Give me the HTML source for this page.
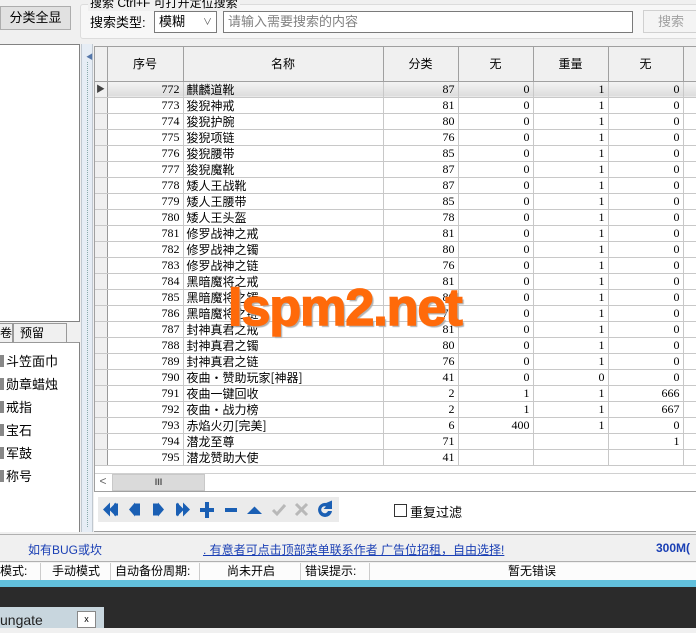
<!DOCTYPE html><html><head><meta charset="utf-8"><style>
*{box-sizing:border-box;margin:0;padding:0}
body{width:696px;height:628px;overflow:hidden;background:#f0f0f0;font-family:"Liberation Sans","Noto Sans CJK SC",sans-serif;font-size:12px;color:#000;position:relative}
.a{position:absolute}
.g td{height:16px;border-right:1px solid #c8c8c8;border-bottom:1px solid #c8c8c8;padding:0 3px;font-size:12px;line-height:15px;white-space:nowrap;overflow:hidden}
.g{border-collapse:collapse;table-layout:fixed;font-family:"Liberation Serif","Noto Sans CJK SC",serif}
.g td.r{text-align:right}
.g td.n{font-family:"Noto Sans CJK SC",sans-serif}
.g td.i{background:#f0f0f0;border-right:1px solid #999}
.hd td{height:35px;background:#f0f0f0;text-align:center;border-right:1px solid #a0a0a0;border-bottom:1px solid #a0a0a0;font-family:"Noto Sans CJK SC",sans-serif;font-size:12px}
.sel td{background:linear-gradient(#f4f4f4,#dcdcdc)}
.li{position:absolute;left:0;font-size:13px}
.li:before{content:"";display:inline-block;width:4px;height:12px;background:#888;margin-right:2px;vertical-align:-1px}
</style></head><body>
<!-- top -->
<div class="a" style="left:0;top:6px;width:71px;height:24px;background:#e1e1e1;border:1px solid #adadad;text-align:center;line-height:22px;font-size:13px">分类全显</div>
<div class="a" style="left:80px;top:4px;width:620px;height:35px;border:1px solid #dcdcdc;border-radius:3px;background:#f7f7f7"></div>
<div class="a" style="left:88px;top:-6px;font-size:12px;background:#f0f0f0;padding:0 2px">搜索  Ctrl+F 可打开定位搜索</div>
<div class="a" style="left:90px;top:12px;font-size:13px">搜索类型:</div>
<div class="a" style="left:154px;top:11px;width:63px;height:22px;border:1px solid #7a7a7a;background:#fff;font-size:13px;line-height:20px;padding-left:4px">模糊<span style="position:absolute;right:4px;top:0;font-size:9px;color:#555">&#8744;</span></div>
<div class="a" style="left:223px;top:11px;width:410px;height:22px;border:1px solid #7a7a7a;background:#fff;font-size:13px;line-height:20px;padding-left:4px;color:#808080">请输入需要搜索的内容</div>
<div class="a" style="left:643px;top:10px;width:60px;height:23px;border:1px solid #d0d0d0;background:#f4f4f4;color:#a0a0a0;font-size:13px;line-height:21px;padding-left:14px">搜索</div>
<!-- left -->
<div class="a" style="left:0;top:44px;width:80px;height:278px;background:#fff;border:1px solid #828282;border-left:none"></div>
<div class="a" style="left:-10px;top:323px;width:23px;height:20px;border:1px solid #999;background:#f0f0f0;font-size:12px;line-height:18px;text-align:right">卷</div>
<div class="a" style="left:13px;top:323px;width:54px;height:20px;border:1px solid #999;background:#f0f0f0;font-size:12px;line-height:18px;padding-left:6px">预留</div>
<div class="a" style="left:0;top:342px;width:80px;height:190px;background:#fff;border-right:1px solid #828282;border-top:1px solid #999"></div>
<div class="li" style="top:351px">斗笠面巾</div>
<div class="li" style="top:374px">勋章蜡烛</div>
<div class="li" style="top:397px">戒指</div>
<div class="li" style="top:420px">宝石</div>
<div class="li" style="top:443px">军鼓</div>
<div class="li" style="top:466px">称号</div>
<div class="a" style="left:81px;top:44px;width:12px;height:488px;background:#e6edf5;border-left:1px solid #c0c8d0;border-right:1px solid #c0c8d0"></div>
<div class="a" style="left:87px;top:62px;height:465px;border-left:1px dotted #8aa"></div>
<div class="a" style="left:86px;top:52px;font-size:7px;color:#5577aa">&#9664;</div>
<!-- grid -->
<div class="a" style="left:94px;top:46px;width:602px;height:445px;background:#fff;border-top:1px solid #a0a0a0;border-left:1px solid #a0a0a0;overflow:hidden">
<table class="g" style="width:640px;margin-top:-1px"><colgroup><col style="width:12px"><col style="width:76px"><col style="width:200px"><col style="width:75px"><col style="width:75px"><col style="width:75px"><col style="width:75px"><col style="width:52px"></colgroup>
<tr class="hd"><td></td><td>序号</td><td>名称</td><td>分类</td><td>无</td><td>重量</td><td>无</td><td></td></tr>
<tr class="sel"><td class="i" style="font-size:9px;color:#444;padding:0 1px">&#9654;</td><td class="r">772</td><td class="n">麒麟道靴</td><td class="r">87</td><td class="r">0</td><td class="r">1</td><td class="r">0</td><td></td></tr>
<tr><td class="i"></td><td class="r">773</td><td class="n">狻猊神戒</td><td class="r">81</td><td class="r">0</td><td class="r">1</td><td class="r">0</td><td></td></tr>
<tr><td class="i"></td><td class="r">774</td><td class="n">狻猊护腕</td><td class="r">80</td><td class="r">0</td><td class="r">1</td><td class="r">0</td><td></td></tr>
<tr><td class="i"></td><td class="r">775</td><td class="n">狻猊项链</td><td class="r">76</td><td class="r">0</td><td class="r">1</td><td class="r">0</td><td></td></tr>
<tr><td class="i"></td><td class="r">776</td><td class="n">狻猊腰带</td><td class="r">85</td><td class="r">0</td><td class="r">1</td><td class="r">0</td><td></td></tr>
<tr><td class="i"></td><td class="r">777</td><td class="n">狻猊魔靴</td><td class="r">87</td><td class="r">0</td><td class="r">1</td><td class="r">0</td><td></td></tr>
<tr><td class="i"></td><td class="r">778</td><td class="n">矮人王战靴</td><td class="r">87</td><td class="r">0</td><td class="r">1</td><td class="r">0</td><td></td></tr>
<tr><td class="i"></td><td class="r">779</td><td class="n">矮人王腰带</td><td class="r">85</td><td class="r">0</td><td class="r">1</td><td class="r">0</td><td></td></tr>
<tr><td class="i"></td><td class="r">780</td><td class="n">矮人王头盔</td><td class="r">78</td><td class="r">0</td><td class="r">1</td><td class="r">0</td><td></td></tr>
<tr><td class="i"></td><td class="r">781</td><td class="n">修罗战神之戒</td><td class="r">81</td><td class="r">0</td><td class="r">1</td><td class="r">0</td><td></td></tr>
<tr><td class="i"></td><td class="r">782</td><td class="n">修罗战神之镯</td><td class="r">80</td><td class="r">0</td><td class="r">1</td><td class="r">0</td><td></td></tr>
<tr><td class="i"></td><td class="r">783</td><td class="n">修罗战神之链</td><td class="r">76</td><td class="r">0</td><td class="r">1</td><td class="r">0</td><td></td></tr>
<tr><td class="i"></td><td class="r">784</td><td class="n">黑暗魔将之戒</td><td class="r">81</td><td class="r">0</td><td class="r">1</td><td class="r">0</td><td></td></tr>
<tr><td class="i"></td><td class="r">785</td><td class="n">黑暗魔将之镯</td><td class="r">80</td><td class="r">0</td><td class="r">1</td><td class="r">0</td><td></td></tr>
<tr><td class="i"></td><td class="r">786</td><td class="n">黑暗魔将之链</td><td class="r">76</td><td class="r">0</td><td class="r">1</td><td class="r">0</td><td></td></tr>
<tr><td class="i"></td><td class="r">787</td><td class="n">封神真君之戒</td><td class="r">81</td><td class="r">0</td><td class="r">1</td><td class="r">0</td><td></td></tr>
<tr><td class="i"></td><td class="r">788</td><td class="n">封神真君之镯</td><td class="r">80</td><td class="r">0</td><td class="r">1</td><td class="r">0</td><td></td></tr>
<tr><td class="i"></td><td class="r">789</td><td class="n">封神真君之链</td><td class="r">76</td><td class="r">0</td><td class="r">1</td><td class="r">0</td><td></td></tr>
<tr><td class="i"></td><td class="r">790</td><td class="n">夜曲・赞助玩家[神器]</td><td class="r">41</td><td class="r">0</td><td class="r">0</td><td class="r">0</td><td></td></tr>
<tr><td class="i"></td><td class="r">791</td><td class="n">夜曲一键回收</td><td class="r">2</td><td class="r">1</td><td class="r">1</td><td class="r">666</td><td></td></tr>
<tr><td class="i"></td><td class="r">792</td><td class="n">夜曲・战力榜</td><td class="r">2</td><td class="r">1</td><td class="r">1</td><td class="r">667</td><td></td></tr>
<tr><td class="i"></td><td class="r">793</td><td class="n">赤焰火刃[完美]</td><td class="r">6</td><td class="r">400</td><td class="r">1</td><td class="r">0</td><td></td></tr>
<tr><td class="i"></td><td class="r">794</td><td class="n">潜龙至尊</td><td class="r">71</td><td class="r"></td><td class="r"></td><td class="r">1</td><td></td></tr>
<tr><td class="i"></td><td class="r">795</td><td class="n">潜龙赞助大使</td><td class="r">41</td><td class="r"></td><td class="r"></td><td class="r"></td><td></td></tr>
</table>
<div class="a" style="left:0;top:426px;width:602px;height:18px;background:#fff;border-top:1px solid #d0d0d0"></div>
<div class="a" style="left:0;top:426px;width:16px;height:18px;font-size:12px;color:#666;text-align:center;line-height:17px">&lt;</div>
<div class="a" style="left:17px;top:427px;width:93px;height:17px;background:#dadada;border:1px solid #c8c8c8;text-align:center;font-size:9px;line-height:15px;color:#555;font-weight:bold">III</div>
</div>
<div class="a" style="left:94px;top:491px;width:602px;height:41px;background:#fff;border-top:1px solid #a0a0a0;border-bottom:1px solid #a0a0a0"></div>
<div class="a" style="left:98px;top:497px;width:241px;height:25px;background:#ebebeb"></div>
<svg class="a" style="left:98px;top:497px" width="241" height="25" viewBox="0 0 241 25">
<g fill="#1a5fb4">
<path d="M5 12.5l7-7v14zM11 12.5l7-7v14zM16 6.5h4v12h-4z"/>
<path d="M31 12.5l6-7v14zM36 6.5h6v12h-6z"/>
<path d="M66 12.5l-6-7v14zM61 6.5h-6v12h6z"/>
<path d="M92 12.5l-7-7v14zM86 12.5l-7-7v14zM81 6.5h-3v12h3z"/>
<path d="M107 5h4v6h5v4h-5v6h-4v-6h-5v-4h5z"/>
<path d="M127 11h12v4h-12z"/>
<path d="M149 17l7.5-7.5 7.5 7.5z"/>
<path d="M228 6a7 7 0 1 0 6 8h-4a3.5 3.5 0 1 1-2-4.5l-2.5 2.5h8.5v-8.5z"/>
</g>
<path d="M175 13l4 4 8-9" stroke="#b8b8b8" stroke-width="3" fill="none"/>
<path d="M198 7l11 11M209 7l-11 11" stroke="#b8b8b8" stroke-width="3"/>
</svg>
<div class="a" style="left:394px;top:504px;width:13px;height:13px;border:1px solid #333;background:#fff"></div>
<div class="a" style="left:410px;top:502px;font-size:13px">重复过滤</div>
<!-- watermark -->
<div class="a" style="left:228px;top:282px;font-size:52px;font-weight:bold;color:#ff6a0a;font-family:'Liberation Sans',sans-serif;line-height:52px;text-shadow:2px 2px 1px #b0b0b0;letter-spacing:-1px;-webkit-text-stroke:1.5px #ff6a0a">lspm2.net</div>
<!-- status -->
<div class="a" style="left:0;top:534px;width:696px;height:28px;background:#f0f0f0;border-top:1px solid #b0b0b0;border-bottom:1px solid #b0b0b0"></div>
<div class="a" style="left:28px;top:541px;color:#1a3fb4;font-size:12px">如有BUG或坎</div>
<div class="a" style="left:203px;top:541px;color:#1a3fb4;font-size:12px;text-decoration:underline">. 有意者可点击顶部菜单联系作者  广告位招租，自由选择!</div>
<div class="a" style="left:656px;top:541px;color:#1a3fb4;font-size:12px;font-weight:bold">300M(</div>
<div class="a" style="left:0;top:563px;width:696px;height:17px;background:#fcfcfc;font-size:12px;line-height:17px">
<span class="a" style="left:0">模式:</span><span class="a" style="left:40px;border-left:1px solid #ccc;padding-left:11px;height:17px">手动模式</span><span class="a" style="left:110px;border-left:1px solid #ccc;padding-left:4px;height:17px">自动备份周期:</span><span class="a" style="left:199px;border-left:1px solid #ccc;padding-left:27px;height:17px;width:100px">尚未开启</span><span class="a" style="left:300px;border-left:1px solid #ccc;padding-left:4px;height:17px">错误提示:</span><span class="a" style="left:369px;border-left:1px solid #ccc;padding-left:138px;height:17px;width:320px">暂无错误</span></div>
<div class="a" style="left:0;top:580px;width:696px;height:7px;background:#62c0dc"></div>
<div class="a" style="left:0;top:587px;width:696px;height:41px;background:#2b2b2b"></div>
<div class="a" style="left:0;top:607px;width:104px;height:21px;background:#c8d6de;font-size:14px;line-height:26px;padding-left:0;color:#222">ungate</div>
<div class="a" style="left:77px;top:611px;width:19px;height:17px;background:#fff;border:1px solid #888;font-size:9px;text-align:center;line-height:14px">x</div>
</body></html>
